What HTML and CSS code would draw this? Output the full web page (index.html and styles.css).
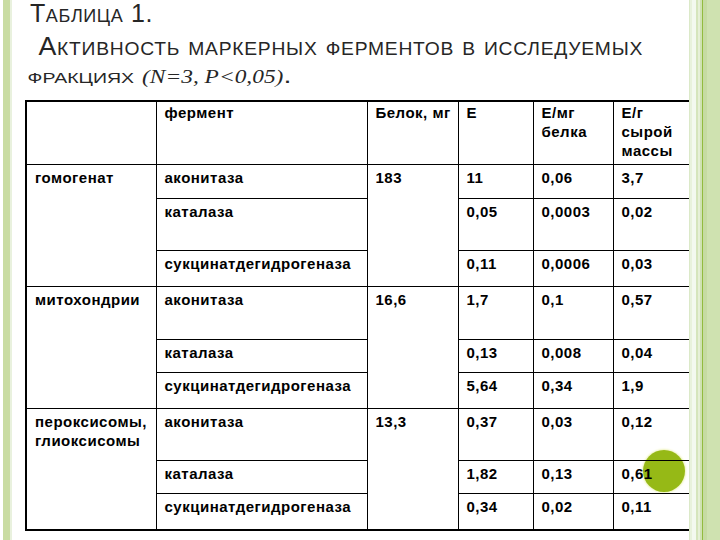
FILE: index.html
```html
<!DOCTYPE html>
<html lang="ru">
<head>
<meta charset="utf-8">
<title>Таблица 1</title>
<link rel="stylesheet" href="styles.css">
</head>
<body>
<div class="slide">
  <div class="deco-left"></div>
  <div class="main">
    <div class="title">
      <div class="t1">Таблица 1.</div>
      <div class="t2">&nbsp;Активность маркерных ферментов в исследуемых</div>
      <div class="t3"><span class="sc">фракциях</span> <span class="it">(N=3, P&lt;0,05)</span>.</div>
    </div>
    <table class="data">
      <colgroup>
        <col class="c1"><col class="c2"><col class="c3"><col class="c4"><col class="c5"><col class="c6">
      </colgroup>
      <tr class="h65">
        <td></td><td>фермент</td><td>Белок, мг</td><td>Е</td><td>Е/мг<br>белка</td><td>Е/г<br>сырой<br>массы</td>
      </tr>
      <tr class="h34">
        <td rowspan="3">гомогенат</td><td>аконитаза</td><td rowspan="3">183</td><td>11</td><td>0,06</td><td>3,7</td>
      </tr>
      <tr class="h52">
        <td>каталаза</td><td>0,05</td><td>0,0003</td><td>0,02</td>
      </tr>
      <tr class="h36">
        <td>сукцинатдегидрогеназа</td><td>0,11</td><td>0,0006</td><td>0,03</td>
      </tr>
      <tr class="h53">
        <td rowspan="3">митохондрии</td><td>аконитаза</td><td rowspan="3">16,6</td><td>1,7</td><td>0,1</td><td>0,57</td>
      </tr>
      <tr class="h33">
        <td>каталаза</td><td>0,13</td><td>0,008</td><td>0,04</td>
      </tr>
      <tr class="h36">
        <td>сукцинатдегидрогеназа</td><td>5,64</td><td>0,34</td><td>1,9</td>
      </tr>
      <tr class="h52">
        <td rowspan="3">пероксисомы,<br>глиоксисомы</td><td>аконитаза</td><td rowspan="3">13,3</td><td>0,37</td><td>0,03</td><td>0,12</td>
      </tr>
      <tr class="h33">
        <td>каталаза</td><td>1,82</td><td>0,13</td><td>0,61</td>
      </tr>
      <tr class="h37">
        <td>сукцинатдегидрогеназа</td><td>0,34</td><td>0,02</td><td>0,11</td>
      </tr>
    </table>
  </div>
  <div class="deco-right"></div>
  <div class="dot"></div>
</div>
</body>
</html>
```
FILE: styles.css
```css
html {
  margin: 0;
  padding: 0;
  background: #ffffff;
}
body {
  margin: 0;
  padding: 0;
  font-family: "Liberation Sans", Arial, sans-serif;
  width: 720px;
  height: 540px;
  overflow: hidden;
}
.slide {
  display: flex;
  width: 720px;
  height: 540px;
}
.deco-left {
  width: 25px;
  flex: none;
  background: linear-gradient(to right,
    #ffffff 0, #ffffff 3px,
    #c9dca2 3px, #c9dca2 10px,
    #e9f1de 10px, #e9f1de 12px,
    #ffffff 12px);
}
.main {
  width: 664px;
  flex: none;
}
.deco-right {
  flex: 1;
  background: linear-gradient(to right,
    #dbe9c8 0, #dbe9c8 1px,
    #e8f2dc 1px, #e8f2dc 3px,
    #f3f9ef 3px, #f3f9ef 7px,
    #d5e5bc 7px, #d5e5bc 9px,
    #e6f0d8 9px, #e6f0d8 11px,
    #d0e2b2 11px, #d0e2b2 13px,
    #92bb3e 13px, #92bb3e 14px,
    #c6dba2 14px, #c6dba2 18px,
    #cfe2b0 18px);
}
.title {
  color: #262626;
  font-variant: small-caps;
}
.t1 {
  font-size: 25px;
  line-height: 27px;
  padding-left: 5px;
  letter-spacing: 0.6px;
}
.t2 {
  font-size: 25px;
  line-height: 38px;
  padding-left: 5px;
  letter-spacing: 0.7px;
  white-space: nowrap;
  width: max-content;
  transform: scaleX(1.07);
  transform-origin: left center;
}
.t3 {
  font-size: 22px;
  line-height: 22px;
  padding-left: 2px;
  white-space: nowrap;
  width: max-content;
  transform: scaleX(1.3);
  transform-origin: left center;
}
.t3 .it {
  font-family: "Liberation Serif", "Times New Roman", serif;
  font-style: italic;
  font-variant: normal;
  font-size: 18px;
  line-height: 22px;
}
.data {
  margin-top: 12px;
  border-collapse: collapse;
  table-layout: fixed;
  width: 664px;
  border: 2px solid #000;
  font-size: 15px;
  font-weight: bold;
  letter-spacing: 0.5px;
  color: #000;
}
.data td {
  border: 1px solid #000;
  vertical-align: top;
  padding: 3px 8px 0 8px;
  line-height: 19px;
  white-space: nowrap;
}
.c1 { width: 130px; }
.c2 { width: 211px; }
.c3 { width: 91px; }
.c4 { width: 75px; }
.c5 { width: 80px; }
.c6 { width: 77px; }
.h65 { height: 63px; }
.h65 td { padding-top: 1px; }
.h34 { height: 34px; }
.h52 { height: 52px; }
.h53 { height: 53px; }
.h36 { height: 36px; }
.h37 { height: 37px; }
.h33 { height: 33px; }
.dot {
  position: absolute;
  left: 643px;
  top: 450px;
  width: 42px;
  height: 42px;
  border-radius: 50%;
  background: #96b916;
  box-shadow: 0 0 2px 1px #eef3b8;
  z-index: -1;
}
```
